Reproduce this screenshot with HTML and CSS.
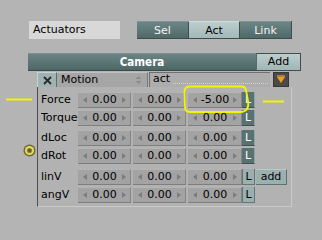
FILE: index.html
```html
<!DOCTYPE html>
<html>
<head>
<meta charset="utf-8">
<link rel="stylesheet" href="styles.css">
</head>
<body>
<div class="page">
  <div class="toprow">
    <div class="namebox">Actuators</div>
    <div class="tabs">
      <div class="tab dark">Sel</div>
      <div class="tab light">Act</div>
      <div class="tab dark">Link</div>
    </div>
  </div>
  <div class="header">
    <div class="camera">Camera</div>
    <div class="addbtn">Add</div>
  </div>
  <div class="body">
    <div class="gutter">
      <svg class="radio" width="13" height="13" viewBox="0 0 13 13">
        <circle cx="6.5" cy="6.5" r="6" fill="#6e6a28"/>
        <circle cx="6.5" cy="6.5" r="4.6" fill="#e0d86a"/>
        <circle cx="6.5" cy="6.5" r="2.6" fill="#8a8234"/>
        <circle cx="6.5" cy="6.5" r="1.4" fill="#5a5620"/>
      </svg>
    </div>
    <div class="block">
      <div class="menurow">
        <div class="xbtn">
          <svg width="9" height="9" viewBox="0 0 9 9"><path d="M1 1 L8 8 M8 1 L1 8" stroke="#2a2a2a" stroke-width="1.8" fill="none"/></svg>
        </div>
        <div class="menu">
          <span>Motion</span>
          <svg width="7" height="10" viewBox="0 0 7 10"><path d="M0.5 4 L3.5 1 L6.5 4 Z M0.5 6 L3.5 9 L6.5 6 Z" fill="#8c8c8c"/></svg>
        </div>
        <div class="namefield"><span>act</span><span class="dots"></span></div>
        <div class="tri">
          <svg width="10" height="9" viewBox="0 0 10 9"><path d="M1 2 L9 2 L5 8 Z" fill="#f0a010"/><path d="M1 1 L9 1" stroke="#f8c040" stroke-width="1"/></svg>
        </div>
      </div>
      <div class="panel">
        <div class="group">
          <div class="row">
            <div class="label">Force</div>
            <div class="num">0.00</div><div class="num">0.00</div><div class="num wide">-5.00</div>
            <div class="lbtn on">L</div>
          </div>
          <div class="row">
            <div class="label">Torque</div>
            <div class="num">0.00</div><div class="num">0.00</div><div class="num wide">0.00</div>
            <div class="lbtn on">L</div>
          </div>
        </div>
        <div class="group g2">
          <div class="row">
            <div class="label">dLoc</div>
            <div class="num">0.00</div><div class="num">0.00</div><div class="num wide">0.00</div>
            <div class="lbtn on">L</div>
          </div>
          <div class="row">
            <div class="label">dRot</div>
            <div class="num">0.00</div><div class="num">0.00</div><div class="num wide">0.00</div>
            <div class="lbtn on">L</div>
          </div>
        </div>
        <div class="group g3">
          <div class="row">
            <div class="label">linV</div>
            <div class="num">0.00</div><div class="num">0.00</div><div class="num wide">0.00</div>
            <div class="lbtn off">L</div>
            <div class="addsmall">add</div>
          </div>
          <div class="row">
            <div class="label">angV</div>
            <div class="num">0.00</div><div class="num">0.00</div><div class="num wide">0.00</div>
            <div class="lbtn off">L</div>
          </div>
        </div>
      </div>
    </div>
  </div>
  <svg class="annot" width="322" height="239" viewBox="0 0 322 239">
    <path d="M6 99.5 L32 99.5" stroke="#f4f400" stroke-width="2" fill="none"/>
    <path d="M263 101.5 L284 101.5" stroke="#f4f400" stroke-width="2" fill="none"/>
    <path d="M189 86.5 L242 86.5 Q245 86.5 246 90 L248 101 Q249 106 247 109 Q245 112 240 112 L190 112 Q185 112 185 107 L184.5 92 Q184.5 87 189 86.5 Z" stroke="#f4f400" stroke-width="1.8" fill="none"/>
  </svg>
</div>
</body>
</html>
```
FILE: styles.css
```css
* { box-sizing: border-box; }
html, body { margin: 0; padding: 0; }
body {
  background: #b4b4b4;
  font-family: "DejaVu Sans", "Liberation Sans", sans-serif;
  font-size: 11px;
  color: #000;
  width: 322px;
  height: 239px;
  overflow: hidden;
}
.page { position: relative; width: 322px; height: 239px; }

.toprow {
  display: flex;
  padding-top: 21px;
  padding-left: 29px;
  height: 39px;
}
.namebox {
  width: 91px;
  height: 18px;
  background: #d8d8d8;
  padding-left: 4px;
  line-height: 18px;
  font-size: 11px;
}
.tabs {
  display: flex;
  margin-left: 17px;
  height: 18px;
  border-right: 1px solid #3e4e4e;
  border-bottom: 1px solid #3e4e4e;
}
.tab {
  height: 17px;
  line-height: 17px;
  text-align: center;
  font-size: 11px;
}
.tab:nth-child(1) { width: 51px; }
.tab:nth-child(2) { width: 52px; }
.tab:nth-child(3) { width: 51px; }
.dark {
  background: linear-gradient(#6c8686, #506868);
  color: #f4f4f4;
  border-top: 1px solid #7c9494;
}
.light {
  background: linear-gradient(#bccece, #a4b8b8);
  color: #000;
  border-top: 1px solid #cfdcdc;
  border-left: 1px solid #3e4e4e;
  border-right: 1px solid #3e4e4e;
}

.header {
  display: flex;
  margin-top: 14px;
  margin-left: 28px;
  height: 18px;
}
.camera {
  width: 228px;
  height: 18px;
  background: linear-gradient(#6a8484, #4e6666);
  border-top: 1px solid #7a9292;
  border-bottom: 1px solid #3a4a4a;
  color: #fff;
  font-family: "DejaVu Sans Condensed", "DejaVu Sans", sans-serif;
  font-weight: bold;
  font-size: 11.5px;
  text-align: center;
  line-height: 16px;
}
.addbtn {
  width: 45px;
  height: 18px;
  background: linear-gradient(#bccdcd, #a2b6b6);
  border: 1px solid #3e4e4e;
  border-left-color: #556a6a;
  text-align: center;
  line-height: 16px;
  font-size: 11px;
}

.body {
  display: flex;
  margin-top: 1px;
}
.gutter {
  width: 37px;
  padding-top: 72px;
  padding-left: 23px;
}
.radio { display: block; }
.block { width: 255px; }

.menurow {
  display: flex;
  height: 15px;
  align-items: stretch;
}
.xbtn {
  width: 20px;
  background: #9fb3b3;
  border-top: 1px solid #c4d2d2;
  border-left: 1px solid #c4d2d2;
  border-right: 1px solid #5e7070;
  display: flex;
  align-items: center;
  justify-content: center;
}
.menu {
  width: 91px;
  background: #a6a6a6;
  border-top: 1px solid #c0c0c0;
  border-right: 1px solid #7a7a7a;
  display: flex;
  align-items: center;
  justify-content: space-between;
  padding: 0 5px 0 4px;
  line-height: 14px;
}
.namefield {
  width: 121px;
  margin-left: 1px;
  background: #adadad;
  border-top: 1px solid #707070;
  border-left: 1px solid #707070;
  display: flex;
  align-items: flex-end;
  padding: 0 2px 2px 3px;
  line-height: 12px;
}
.dots {
  flex: 1;
  margin-left: 3px;
  margin-bottom: 1px;
  border-bottom: 1px dotted #d4d4d4;
}
.tri {
  width: 16px;
  margin-left: 3px;
  background: #4c4a44;
  border: 1px solid #383630;
  display: flex;
  align-items: center;
  justify-content: center;
}

.panel {
  height: 120px;
  border-left: 1px solid #4e4e4e;
  border-right: 1px solid #cacaca;
  border-bottom: 1px solid #cacaca;
  background: #b2b2b2;
  padding-top: 5px;
  padding-left: 3px;
}
.group { display: flex; flex-direction: column; gap: 2px; }
.g2 { margin-top: 4px; }
.g3 { margin-top: 5px; }
.row {
  display: flex;
  height: 16px;
  align-items: stretch;
}
.label {
  width: 37px;
  white-space: nowrap;
  overflow: hidden;
  line-height: 15px;
  font-size: 11px;
}
.num {
  width: 53px;
  margin-right: 2px;
  background: #a3a3a3;
  border-top: 1px solid #b4b4b4;
  border-bottom: 1px solid #7e7e7e;
  border-right: 1px solid #858585;
  display: flex;
  align-items: center;
  justify-content: space-between;
  padding: 0 4px 0 5px;
  font-size: 11px;
  line-height: 14px;
}
.num.wide { width: 54px; margin-right: 0; }
.num::before {
  content: "";
  width: 0; height: 0;
  border-top: 3.5px solid transparent;
  border-bottom: 3.5px solid transparent;
  border-right: 4px solid #7c7c7c;
}
.num::after {
  content: "";
  width: 0; height: 0;
  border-top: 3.5px solid transparent;
  border-bottom: 3.5px solid transparent;
  border-left: 4px solid #7c7c7c;
}
.lbtn {
  width: 13px;
  text-align: center;
  font-size: 11px;
  line-height: 15px;
}
.lbtn.on {
  background: #587272;
  color: #fff;
  border-right: 1px solid #8fa6a6;
  border-bottom: 1px solid #3e5050;
}
.lbtn.off {
  background: #9ab0b0;
  color: #000;
  border-right: 1px solid #627676;
  border-bottom: 1px solid #627676;
  border-left: 1px solid #627676;
}
.addsmall {
  width: 31px;
  margin-left: 1px;
  background: #9cb0b0;
  border-right: 1px solid #5e7272;
  border-bottom: 1px solid #5e7272;
  border-top: 1px solid #bccaca;
  text-align: center;
  line-height: 14px;
  font-size: 11px;
}

.annot {
  position: absolute;
  left: 0;
  top: 0;
  pointer-events: none;
}
```
